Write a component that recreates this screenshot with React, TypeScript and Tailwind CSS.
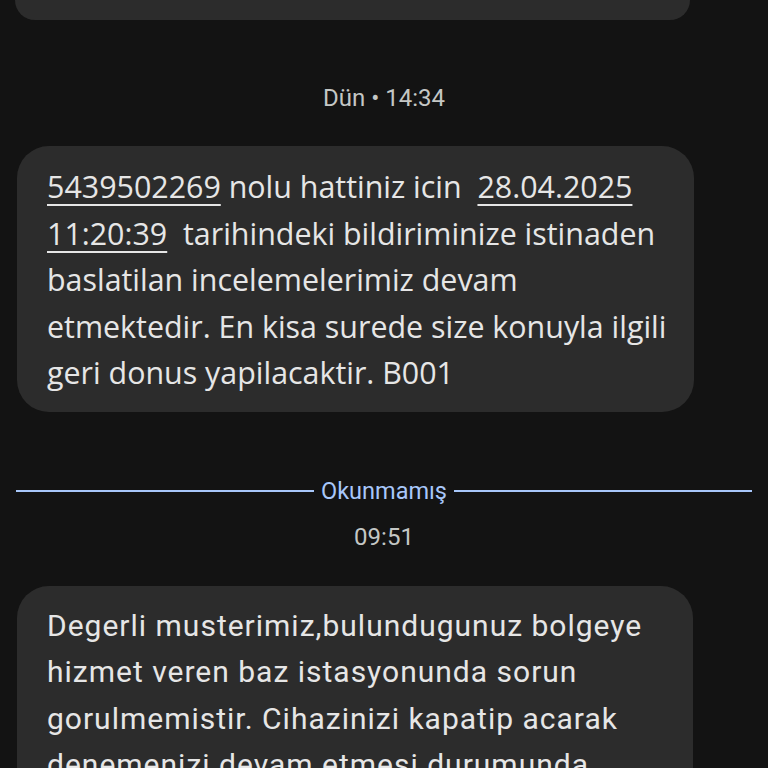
export default function App() {
  return (
    <div className="min-h-[768px] h-[768px] overflow-hidden bg-[#131313] font-['Roboto',sans-serif] text-[#e3e3e3]">
      <div className="mx-[15px] mr-[78px] h-[20px] rounded-b-[32px] bg-[#2c2c2c]" />

      <div className="mt-[64px] text-center text-[24px] leading-[28px] text-[#c4c7c5]">
        Dün • 14:34
      </div>

      <div className="mt-[34px] ml-[17px] mr-[74px] rounded-[32px] bg-[#2c2c2c] pl-[30px] pr-[5px] pt-[18px] pb-[15px] font-['Open_Sans',sans-serif] text-[30.4px] leading-[46.5px] text-[#e6e6e6]">
        <span className="underline decoration-2 underline-offset-[6px]">5439502269</span> nolu hattiniz icin{"\u00a0 "}
        <span className="underline decoration-2 underline-offset-[6px]">28.04.2025</span>
        <br />
        <span className="underline decoration-2 underline-offset-[6px]">11:20:39</span>{"\u00a0 "}tarihindeki bildiriminize istinaden
        <br />
        baslatilan incelemelerimiz devam
        <br />
        etmektedir. En kisa surede size konuyla ilgili
        <br />
        geri donus yapilacaktir. B001
      </div>

      <div className="mt-[65px] flex items-center gap-[7px] px-[16px]">
        <div className="h-[2px] flex-1 bg-[#a8c7fa]" />
        <span className="text-[23.5px] leading-[28px] text-[#a8c7fa]">Okunmamış</span>
        <div className="h-[2px] flex-1 bg-[#a8c7fa]" />
      </div>

      <div className="mt-[18px] text-center text-[24px] leading-[28px] text-[#c4c7c5]">
        09:51
      </div>

      <div className="mt-[35px] ml-[17px] mr-[75px] rounded-[32px] bg-[#2c2c2c] pl-[30px] pr-[5px] pt-[17px] pb-[15px] text-[30px] tracking-[1px] leading-[46.5px] text-[#e6e6e6]">
        Degerli musterimiz,bulundugunuz bolgeye
        <br />
        hizmet veren baz istasyonunda sorun
        <br />
        gorulmemistir. Cihazinizi kapatip acarak
        <br />
        denemenizi devam etmesi durumunda
        <br />
        bize ulasabilirsiniz.
      </div>
    </div>
  );
}
